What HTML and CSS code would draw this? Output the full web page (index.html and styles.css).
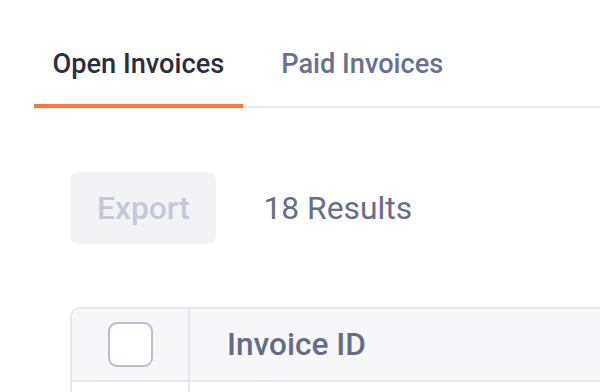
FILE: index.html
```html
<!DOCTYPE html>
<html>
<head>
<meta charset="utf-8">
<link rel="stylesheet" href="styles.css">
</head>
<body>
<div class="page">
  <nav class="tabs">
    <div class="tab active">Open Invoices</div>
    <div class="tab">Paid Invoices</div>
  </nav>
  <main class="content">
    <div class="toolbar">
      <button class="btn-export" disabled>Export</button>
      <span class="results">18 Results</span>
    </div>
    <div class="table">
      <div class="row head">
        <div class="cell check"><span class="checkbox"></span></div>
        <div class="cell title">Invoice ID</div>
      </div>
      <div class="row body">
        <div class="cell check"></div>
        <div class="cell title"></div>
      </div>
    </div>
  </main>
</div>
</body>
</html>
```
FILE: styles.css
```css
html, body {
  margin: 0;
  padding: 0;
  overflow: hidden;
  background: #ffffff;
  font-family: Roboto, "Liberation Sans", sans-serif;
}
.page {
  width: 600px;
  height: 392px;
  overflow: hidden;
}
.tabs {
  display: flex;
  gap: 20px;
  margin-left: 34px;
  padding-top: 48px;
  border-bottom: 2px solid #e7e8ee;
}
.tab {
  padding: 0 18.5px 24px;
  line-height: 32px;
  font-size: 27.2px;
  font-weight: 500;
  color: #6a7090;
  border-bottom: 4px solid transparent;
  margin-bottom: -2px;
}
.tab.active {
  color: #2c2e3d;
  border-bottom-color: #ff7438;
}
.content {
  padding-left: 70px;
  padding-top: 64px;
}
.toolbar {
  display: flex;
  align-items: center;
  gap: 47px;
}
.btn-export {
  height: 72px;
  padding: 0 27px;
  border: none;
  border-radius: 8px;
  background: #f3f3f6;
  color: #c5c8d7;
  font-family: Roboto, "Liberation Sans", sans-serif;
  font-size: 31.8px;
  font-weight: 500;
}
.results {
  font-size: 31.8px;
  color: #676d88;
}
.table {
  margin-top: 63px;
  width: 600px;
  border: 2px solid #e6e7ee;
  border-top-left-radius: 10px;
  overflow: hidden;
}
.row {
  display: flex;
}
.row.head {
  height: 71px;
  background: #f7f7f9;
  border-bottom: 2px solid #e6e7ee;
}
.row.body {
  height: 40px;
}
.cell {
  display: flex;
  align-items: center;
}
.cell.check {
  width: 116px;
  justify-content: center;
  border-right: 2px solid #e6e7ee;
}
.cell.title {
  padding-left: 37px;
  font-size: 31.6px;
  font-weight: 500;
  color: #666c87;
}
.checkbox {
  width: 41px;
  height: 41px;
  border: 2.5px solid #b9bdcf;
  border-radius: 9px;
  background: #ffffff;
}
```
